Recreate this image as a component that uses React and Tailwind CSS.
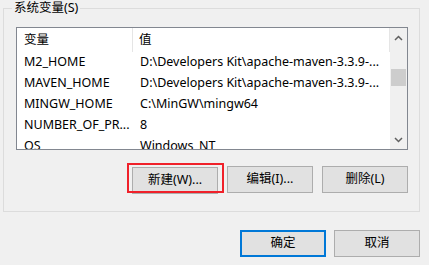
import React from 'react';

const rows = [
  ['M2_HOME', 'D:\\Developers Kit\\apache-maven-3.3.9-...'],
  ['MAVEN_HOME', 'D:\\Developers Kit\\apache-maven-3.3.9-...'],
  ['MINGW_HOME', 'C:\\MinGW\\mingw64'],
  ['NUMBER_OF_PR...', '8'],
  ['OS', 'Windows_NT'],
];

function Chevron({ down }) {
  return (
    <svg width="9" height="6" viewBox="0 0 9 6">
      <path
        d={down ? 'M1 1 L4.5 4.5 L8 1' : 'M1 5 L4.5 1.5 L8 5'}
        fill="none"
        stroke="#606060"
        strokeWidth="1.5"
      />
    </svg>
  );
}

function Button({ children, primary }) {
  return (
    <button
      className={
        primary
          ? 'w-[86px] h-[27px] bg-[#e1e1e1] border-2 border-[#0078d7] text-[12.5px] text-black'
          : 'w-[86px] h-[27px] bg-[#e1e1e1] border border-[#adadad] text-[12.5px] text-black'
      }
    >
      {children}
    </button>
  );
}

export default function App() {
  const font = { fontFamily: '"Noto Sans", "Noto Sans CJK SC", sans-serif' };
  return (
    <div className="w-[429px] h-[265px] bg-[#f0f0f0] overflow-hidden pt-[8px] pl-[3px]" style={font}>
      <div className="relative w-[417px] h-[204px] border border-[#dcdcdc] pl-[12px] pt-[18px]">
        <div className="absolute -top-[9px] left-[8px] bg-[#f0f0f0] px-[2px] text-[12.5px] leading-[16px] text-black">
          系统变量(S)
        </div>

        <div className="flex w-[392px] h-[123px] border border-[#828790] bg-white overflow-hidden">
          <div className="flex-1 flex flex-col">
            <div className="flex h-[24px] shrink-0 text-[12.5px] items-center">
              <div className="w-[116px] h-full pl-[7px] flex items-center border-r border-[#e5e5e5]">变量</div>
              <div className="flex-1 h-full pl-[6px] flex items-center border-r border-[#e5e5e5]">值</div>
            </div>
            {rows.map(([k, v]) => (
              <div key={k} className="flex h-[21px] shrink-0 items-center text-[12.5px] text-black">
                <div className="w-[116px] pl-[7px] whitespace-nowrap">{k}</div>
                <div className="flex-1 pl-[7px] whitespace-nowrap">{v}</div>
              </div>
            ))}
          </div>
          <div className="w-[17px] bg-[#f0f0f0] flex flex-col items-center">
            <div className="h-[17px] w-full flex items-center justify-center pt-[2px]">
              <Chevron />
            </div>
            <div className="mt-[24px] w-[15px] h-[17px] bg-[#cdcdcd]" />
            <div className="flex-1" />
            <div className="h-[17px] w-full flex items-center justify-center pb-[2px]">
              <Chevron down />
            </div>
          </div>
        </div>

        <div className="flex justify-end gap-[9px] w-[392px] mt-[16px]">
          <div className="relative">
            <Button>新建(W)...</Button>
            <div className="absolute -left-[5px] -top-[3px] w-[97px] h-[30px] border-2 border-[#f0212a]" />
          </div>
          <Button>编辑(I)...</Button>
          <Button>删除(L)</Button>
        </div>
      </div>

      <div className="flex justify-end gap-[8px] w-[417px] mt-[18px]">
        <Button primary>确定</Button>
        <Button>取消</Button>
      </div>
    </div>
  );
}
